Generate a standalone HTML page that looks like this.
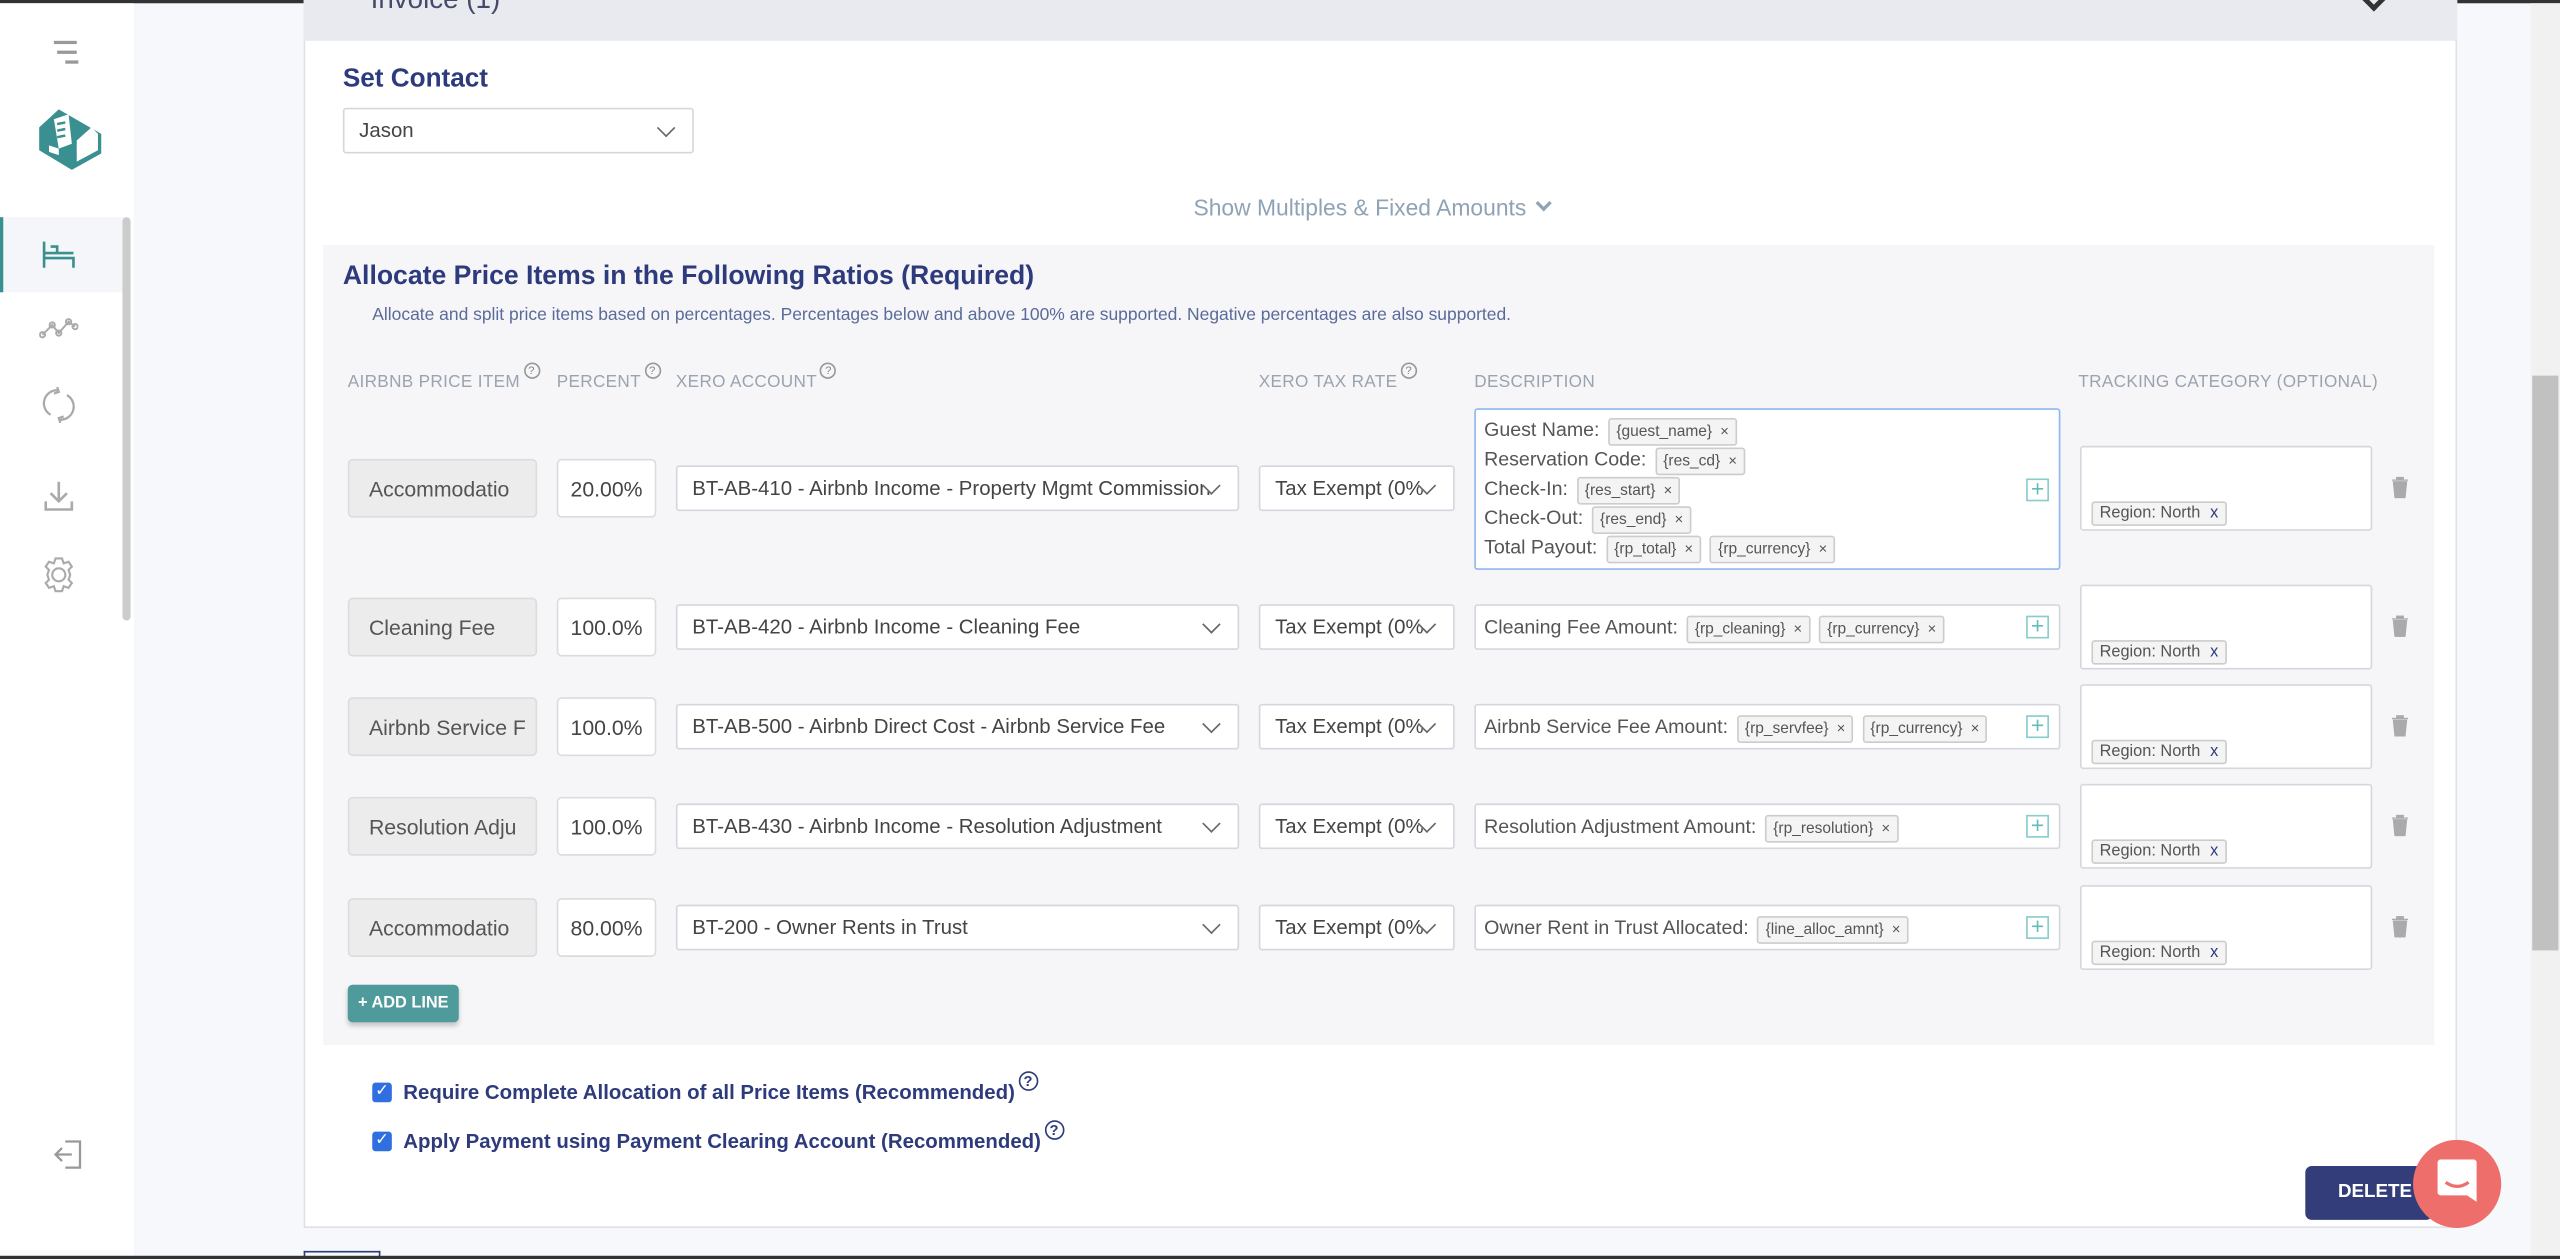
<!DOCTYPE html>
<html><head><meta charset="utf-8"><style>
*{box-sizing:border-box;margin:0;padding:0}
html,body{width:2560px;height:1259px;overflow:hidden;background:#f7f8fb;font-family:"Liberation Sans",sans-serif}
#w{position:absolute;left:0;top:0;width:1568px;height:771px;transform:scale(1.63265,1.633);transform-origin:0 0;background:#f7f8fb}
.a{position:absolute}
.sel{position:absolute;background:#fff;border:1px solid #d4d7dd;border-radius:2px;font-size:12.5px;color:#444;padding-left:9px;display:flex;align-items:center;white-space:nowrap;overflow:hidden}
.chev{position:absolute;right:12px;top:50%;width:8px;height:8px;border-right:1.5px solid #666;border-bottom:1.5px solid #666;transform:translateY(-70%) rotate(45deg);background:#fff}
.hd{position:absolute;top:228px;font-size:10.5px;color:#9aa3b0;letter-spacing:.2px}
.q{display:inline-block;width:10px;height:10px;border:1px solid #999;border-radius:50%;font-size:7px;text-align:center;line-height:9px;color:#888;vertical-align:top;margin-top:-6px;margin-left:2px}
.pi{position:absolute;left:213px;width:116px;height:36px;background:#ececec;border:1px solid #dcdcdc;border-radius:3px;font-size:13px;color:#555;padding-left:12px;display:flex;align-items:center;overflow:hidden;white-space:nowrap}
.pc{position:absolute;left:341px;width:61px;height:36px;background:#fff;border:1px solid #dcdcdc;border-radius:3px;font-size:13px;color:#444;display:flex;align-items:center;justify-content:center}
.ds{position:absolute;left:903px;width:359px;background:#fff;border:1px solid #d4d7dd;border-radius:2px;font-size:12px;color:#555;padding:0 5px}
.tg{display:inline-block;border:1px solid #ccc;background:#f4f4f4;border-radius:2px;font-size:9.5px;padding:1px 4px;color:#555;margin-left:2px;line-height:13px}
.tg i{font-style:normal;margin-left:5px;font-size:9px}
.pl{position:absolute;right:6px;width:14px;height:14px;border:1px solid #8cc;color:#6bb;font-size:14px;line-height:11px;text-align:center}
.tr{position:absolute;left:1274px;width:179px;height:52px;background:#fff;border:1px solid #d4d7dd;border-radius:2px}
.rg{position:absolute;left:6px;bottom:2px;border:1px solid #ccc;background:#f4f4f4;font-size:10px;color:#555;padding:1px 4px;border-radius:2px}
.rg i{font-style:normal;color:#2d3a7c;margin-left:6px}
.tb{position:absolute;left:1465px;width:10px;height:13px}
.cb{position:absolute;left:228px;width:12px;height:12px;background:#2f6fe0;border-radius:2px;color:#fff;font-size:10px;line-height:12px;text-align:center}
.ct{position:absolute;left:247px;font-size:12.5px;font-weight:bold;color:#2d3a7c}
</style></head><body><div id="w">
<div class="a" style="left:0;top:0;width:1568px;height:2px;background:#333"></div>
<!-- sidebar -->
<div class="a" style="left:0;top:2px;width:82px;height:767px;background:#fff"></div>
<div class="a" style="left:33px;top:25px;width:14px;height:2px;background:#999"></div>
<div class="a" style="left:35px;top:31px;width:12px;height:2px;background:#999"></div>
<div class="a" style="left:40px;top:37px;width:8px;height:2px;background:#999"></div>
<svg class="a" style="left:22px;top:64px" width="42" height="42" viewBox="0 0 42 42"><path d="M14 3 L40 18 L40 30 L22 40 L2 28 L2 14 Z" fill="#3a9090"/><path d="M25 22 L34 14 L38 18 L38 28 L25 35 Z" fill="#fff"/><path d="M11 9 L20 6 L22 24 L14 27 Z" fill="#fff"/><path d="M8 25 L14 27 L14 31 L8 29Z" fill="#fff"/><path d="M13 12l5-1M13 16l5-1M13 20l5-1" stroke="#3a9090" stroke-width="1.5"/></svg>
<div class="a" style="left:0;top:133px;width:78px;height:46px;background:#f4f6f9;border-left:2px solid #3a9090"></div>
<svg class="a" style="left:25px;top:146px" width="22" height="20" viewBox="0 0 22 20" fill="none" stroke="#3a8f8f" stroke-width="1.6"><path d="M2 2v16M2 12h18v6M2 9h18M6 5h4v4"/></svg>
<svg class="a" style="left:24px;top:194px" width="24" height="14" viewBox="0 0 24 14" fill="none" stroke="#aaa" stroke-width="1.2"><path d="M2 11l6-6 4 5 6-7 4 3"/><circle cx="2" cy="11" r="1.6"/><circle cx="8" cy="5" r="1.6"/><circle cx="12" cy="10" r="1.6"/><circle cx="18" cy="3" r="1.6"/><circle cx="22" cy="6" r="1.6"/></svg>
<svg class="a" style="left:26px;top:237px" width="20" height="22" viewBox="0 0 20 22" fill="none" stroke="#aaa" stroke-width="1.4"><path d="M15 5a8 8 0 0 1-4 15M5 17A8 8 0 0 1 9 2"/><path d="M9 0l1 3-3 1M11 22l-1-3 3-1"/></svg>
<svg class="a" style="left:27px;top:294px" width="18" height="20" viewBox="0 0 18 20" fill="none" stroke="#aaa" stroke-width="1.6"><path d="M9 1v12M4 8l5 5 5-5M1 13v5h16v-5"/></svg>
<svg class="a" style="left:24px;top:340px" width="24" height="24" viewBox="0 0 24 24" fill="none" stroke="#aaa" stroke-width="1.3"><circle cx="12" cy="12" r="4"/><path d="M10 2h4l1 3 3-1 2 3-2 2 1 3-1 3 2 2-2 3-3-1-1 3h-4l-1-3-3 1-2-3 2-2-1-3 1-3-2-2 2-3 3 1z"/></svg>
<div class="a" style="left:75px;top:133px;width:5px;height:247px;background:#ccc;border-radius:3px"></div>
<svg class="a" style="left:32px;top:697px" width="20" height="20" viewBox="0 0 20 20" fill="none" stroke="#999" stroke-width="1.4"><path d="M8 2h9v16H8M12 10H2M6 6l-4 4 4 4"/></svg>
<!-- scrollbar -->
<div class="a" style="left:1550px;top:2px;width:18px;height:767px;background:#f1f1f1"></div>
<div class="a" style="left:1551px;top:230px;width:16px;height:352px;background:#c1c1c1"></div>
<!-- card -->
<div class="a" style="left:186px;top:0;width:1319px;height:752px;background:#fff;border:1px solid #dfe1e6"></div>
<div class="a" style="left:186px;top:0;width:1319px;height:25px;background:#e9eaef"></div>
<div class="a" style="left:227px;top:-10px;font-size:17px;color:#444a6a">Invoice (1)</div>
<div class="a" style="left:1449px;top:-5px;width:10px;height:10px;border-right:3px solid #333;border-bottom:3px solid #333;transform:rotate(45deg)"></div>
<div class="a" style="left:210px;top:40px;font-size:16px;font-weight:bold;color:#2d3a7c">Set Contact</div>
<div class="sel" style="left:210px;top:66px;width:215px;height:28px">Jason<div class="chev"></div></div>
<div class="a" style="left:731px;top:119px;font-size:14px;color:#8fa3b5">Show Multiples &amp; Fixed Amounts <span style="display:inline-block;width:7px;height:7px;border-right:2.5px solid #8fa3b5;border-bottom:2.5px solid #8fa3b5;transform:rotate(45deg);margin:0 0 4px 3px"></span></div>
<!-- panel -->
<div class="a" style="left:198px;top:150px;width:1293px;height:490px;background:#f6f6f9"></div>
<div class="a" style="left:210px;top:160px;font-size:16.3px;font-weight:bold;color:#2d3a7c">Allocate Price Items in the Following Ratios (Required)</div>
<div class="a" style="left:228px;top:187px;font-size:10.7px;color:#5a6b9a">Allocate and split price items based on percentages. Percentages below and above 100% are supported. Negative percentages are also supported.</div>
<div class="hd" style="left:213px">AIRBNB PRICE ITEM<span class="q">?</span></div>
<div class="hd" style="left:341px">PERCENT<span class="q">?</span></div>
<div class="hd" style="left:414px">XERO ACCOUNT<span class="q">?</span></div>
<div class="hd" style="left:771px">XERO TAX RATE<span class="q">?</span></div>
<div class="hd" style="left:903px">DESCRIPTION</div>
<div class="hd" style="left:1273px">TRACKING CATEGORY (OPTIONAL)</div>

<!-- row1 -->
<div class="pi" style="top:281px">Accommodatio</div>
<div class="pc" style="top:281px">20.00%</div>
<div class="sel" style="left:414px;top:285px;width:345px;height:28px">BT-AB-410 - Airbnb Income - Property Mgmt Commission<div class="chev"></div></div>
<div class="sel" style="left:771px;top:285px;width:120px;height:28px">Tax Exempt (0%<div class="chev"></div></div>
<div class="ds" style="top:250px;height:99px;border-color:#8fb6ef;padding-top:4px;line-height:17.7px">Guest Name: <span class="tg">{guest_name}<i>×</i></span><br>Reservation Code: <span class="tg">{res_cd}<i>×</i></span><br>Check-In: <span class="tg">{res_start}<i>×</i></span><br>Check-Out: <span class="tg">{res_end}<i>×</i></span><br>Total Payout: <span class="tg">{rp_total}<i>×</i></span> <span class="tg">{rp_currency}<i>×</i></span><div class="pl" style="top:42px">+</div></div>
<div class="tr" style="top:273px"><div class="rg">Region: North<i>x</i></div></div>
<!-- row2 -->
<div class="pi" style="top:366px">Cleaning Fee</div>
<div class="pc" style="top:366px">100.0%</div>
<div class="sel" style="left:414px;top:370px;width:345px;height:28px">BT-AB-420 - Airbnb Income - Cleaning Fee<div class="chev"></div></div>
<div class="sel" style="left:771px;top:370px;width:120px;height:28px">Tax Exempt (0%<div class="chev"></div></div>
<div class="ds" style="top:370px;height:28px;line-height:26px">Cleaning Fee Amount: <span class="tg">{rp_cleaning}<i>×</i></span> <span class="tg">{rp_currency}<i>×</i></span><div class="pl" style="top:6px">+</div></div>
<div class="tr" style="top:358px"><div class="rg">Region: North<i>x</i></div></div>
<!-- row3 -->
<div class="pi" style="top:427px">Airbnb Service F</div>
<div class="pc" style="top:427px">100.0%</div>
<div class="sel" style="left:414px;top:431px;width:345px;height:28px">BT-AB-500 - Airbnb Direct Cost - Airbnb Service Fee<div class="chev"></div></div>
<div class="sel" style="left:771px;top:431px;width:120px;height:28px">Tax Exempt (0%<div class="chev"></div></div>
<div class="ds" style="top:431px;height:28px;line-height:26px;white-space:nowrap;overflow:hidden">Airbnb Service Fee Amount: <span class="tg">{rp_servfee}<i>×</i></span> <span class="tg">{rp_currency}<i>×</i></span><div class="pl" style="top:6px;background:#fff">+</div></div>
<div class="tr" style="top:419px"><div class="rg">Region: North<i>x</i></div></div>
<!-- row4 -->
<div class="pi" style="top:488px">Resolution Adju</div>
<div class="pc" style="top:488px">100.0%</div>
<div class="sel" style="left:414px;top:492px;width:345px;height:28px">BT-AB-430 - Airbnb Income - Resolution Adjustment<div class="chev"></div></div>
<div class="sel" style="left:771px;top:492px;width:120px;height:28px">Tax Exempt (0%<div class="chev"></div></div>
<div class="ds" style="top:492px;height:28px;line-height:26px">Resolution Adjustment Amount: <span class="tg">{rp_resolution}<i>×</i></span><div class="pl" style="top:6px">+</div></div>
<div class="tr" style="top:480px"><div class="rg">Region: North<i>x</i></div></div>
<!-- row5 -->
<div class="pi" style="top:550px">Accommodatio</div>
<div class="pc" style="top:550px">80.00%</div>
<div class="sel" style="left:414px;top:554px;width:345px;height:28px">BT-200 - Owner Rents in Trust<div class="chev"></div></div>
<div class="sel" style="left:771px;top:554px;width:120px;height:28px">Tax Exempt (0%<div class="chev"></div></div>
<div class="ds" style="top:554px;height:28px;line-height:26px">Owner Rent in Trust Allocated: <span class="tg">{line_alloc_amnt}<i>×</i></span><div class="pl" style="top:6px">+</div></div>
<div class="tr" style="top:542px"><div class="rg">Region: North<i>x</i></div></div>
<!-- trash -->
<svg class="tb" style="top:292px" viewBox="0 0 10 13"><path d="M0 2h10M3 2V0h4v2M1 3h8l-1 10H2z" fill="#aaa" stroke="#aaa" stroke-width=".8"/></svg>
<svg class="tb" style="top:377px" viewBox="0 0 10 13"><path d="M0 2h10M3 2V0h4v2M1 3h8l-1 10H2z" fill="#aaa" stroke="#aaa" stroke-width=".8"/></svg>
<svg class="tb" style="top:438px" viewBox="0 0 10 13"><path d="M0 2h10M3 2V0h4v2M1 3h8l-1 10H2z" fill="#aaa" stroke="#aaa" stroke-width=".8"/></svg>
<svg class="tb" style="top:499px" viewBox="0 0 10 13"><path d="M0 2h10M3 2V0h4v2M1 3h8l-1 10H2z" fill="#aaa" stroke="#aaa" stroke-width=".8"/></svg>
<svg class="tb" style="top:561px" viewBox="0 0 10 13"><path d="M0 2h10M3 2V0h4v2M1 3h8l-1 10H2z" fill="#aaa" stroke="#aaa" stroke-width=".8"/></svg>
<div class="a" style="left:213px;top:603px;width:68px;height:23px;background:#4f9a9a;border-radius:3px;color:#fff;font-size:10px;font-weight:bold;line-height:23px;text-align:center;box-shadow:0 2px 3px rgba(0,0,0,.2)">+ ADD LINE</div>
<div class="cb" style="top:663px">✓</div>
<div class="ct" style="top:662px">Require Complete Allocation of all Price Items (Recommended)<span class="q" style="border-color:#2d3a7c;color:#2d3a7c;width:12px;height:12px;line-height:11px;font-size:9px">?</span></div>
<div class="cb" style="top:693px">✓</div>
<div class="ct" style="top:692px">Apply Payment using Payment Clearing Account (Recommended)<span class="q" style="border-color:#2d3a7c;color:#2d3a7c;width:12px;height:12px;line-height:11px;font-size:9px">?</span></div>
<div class="a" style="left:1412px;top:714px;width:78px;height:33px;background:#333d7a;border-radius:4px;color:#fff;font-size:11.5px;font-weight:bold;line-height:33px;padding-left:20px">DELETE</div>
<div class="a" style="left:1478px;top:698px;width:54px;height:54px;border-radius:50%;background:#ee6e6b"></div>
<svg class="a" style="left:1493px;top:710px" width="24" height="26" viewBox="0 0 24 26"><path d="M2 0h20a2 2 0 0 1 2 2v24l-6-4H2a2 2 0 0 1-2-2V2a2 2 0 0 1 2-2z" fill="#fff"/><path d="M5 14q7 5 14 0" stroke="#ee6e6b" stroke-width="2" fill="none"/></svg>
<div class="a" style="left:186px;top:766px;width:47px;height:5px;border:1px solid #2d3a7c;border-bottom:none"></div>
<div class="a" style="left:0;top:769px;width:1568px;height:2px;background:#333"></div>
</div></body></html>
